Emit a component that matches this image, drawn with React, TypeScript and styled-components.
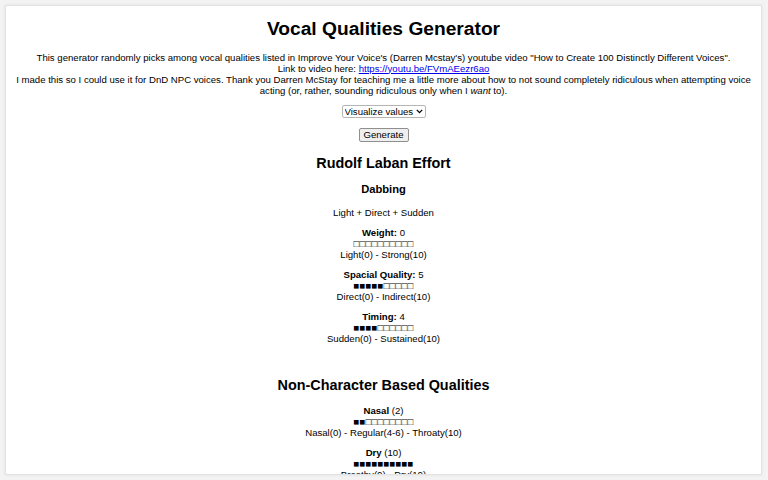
import React from "react";
import styled, { createGlobalStyle } from "styled-components";

const Global = createGlobalStyle`
  html, body { margin: 0; padding: 0; }
  body {
    background: #f3f3f3;
    font-family: "Liberation Sans", Arial, sans-serif;
    font-size: 9.6px;
    color: #000;
  }
`;

const chevron =
  "data:image/svg+xml;utf8," +
  encodeURIComponent(
    '<svg xmlns="http://www.w3.org/2000/svg" width="7" height="5" viewBox="0 0 7 5"><path d="M0.8 0.9 L3.5 3.6 L6.2 0.9" fill="none" stroke="#000" stroke-width="1.3"/></svg>'
  );

const Page = styled.div`
  padding: 5px 6px 5px 5px;
  height: 480px;
  box-sizing: border-box;
`;

const Panel = styled.main`
  background: #fff;
  border: 1px solid #e2e2e2;
  box-shadow: 0 0 3px rgba(0, 0, 0, 0.08);
  height: 470px;
  box-sizing: border-box;
  overflow: hidden;
  padding: 0 8px;
  text-align: center;
  display: flow-root;
`;

const Title = styled.h1`
  font-size: 19.2px;
  font-weight: bold;
  margin: 12px 0 11.5px;
`;

const Intro = styled.p`
  margin: 9.6px 0;
  line-height: normal;
`;

const Link = styled.a`
  color: #0000ee;
  text-decoration: underline;
`;

const Control = styled.div`
  margin: 9.6px 0;
  display: flex;
  justify-content: center;
`;

const Select = styled.select`
  appearance: none;
  -webkit-appearance: none;
  font-family: "Liberation Sans", Arial, sans-serif;
  font-size: 9.6px;
  height: 13px;
  width: 84px;
  padding: 0 0 0 2px;
  line-height: 11px;
  border: 1px solid #b5b5b5;
  border-radius: 2px;
  background: #fff url("${chevron}") no-repeat right 2px center;
  color: #000;
`;

const Button = styled.button`
  font-family: "Liberation Sans", Arial, sans-serif;
  font-size: 9.6px;
  height: 14px;
  width: 50px;
  padding: 0;
  border: 1px solid #8f8f8f;
  border-radius: 2px;
  background: #efefef;
  color: #000;
`;

const SectionTitle = styled.h2<{ $gapTop?: number }>`
  font-size: 14.4px;
  font-weight: bold;
  margin: ${(p) => p.$gapTop ?? 13.3}px 0 12px;
`;

const SubTitle = styled.h3`
  font-size: 11.2px;
  font-weight: bold;
  margin: 11.2px 0 12px;
`;

const Line = styled.p`
  margin: 9.6px 0 9px;
`;

const Stat = styled.div`
  margin: 9px 0;
  line-height: 11px;
`;

const Bar = styled.div`
  letter-spacing: 0.2px;
`;

const bar = (n: number) => "■".repeat(n) + "□".repeat(10 - n);

type StatProps = {
  name: string;
  value: number;
  scale: string;
  paren?: boolean;
};

const StatBlock = ({ name, value, scale, paren }: StatProps) => (
  <Stat>
    <div>
      <b>
        {name}
        {paren ? "" : ":"}
      </b>{" "}
      {paren ? `(${value})` : value}
    </div>
    <Bar>{bar(value)}</Bar>
    <div>{scale}</div>
  </Stat>
);

export default function App() {
  return (
    <>
      <Global />
      <Page>
        <Panel>
          <Title>Vocal Qualities Generator</Title>
          <Intro>
            This generator randomly picks among vocal qualities listed in Improve Your Voice's (Darren
            Mcstay's) youtube video "How to Create 100 Distinctly Different Voices".
            <br />
            Link to video here: <Link href="#">https://youtu.be/FVmAEezr6ao</Link>
            <br />
            I made this so I could use it for DnD NPC voices. Thank you Darren McStay for teaching me a
            little more about how to not sound completely ridiculous when attempting voice acting (or,
            rather, sounding ridiculous only when I <i>want</i> to).
          </Intro>
          <Control>
            <Select defaultValue="visualize">
              <option value="visualize">Visualize values</option>
              <option value="numbers">Numbers only</option>
            </Select>
          </Control>
          <Control>
            <Button>Generate</Button>
          </Control>
          <SectionTitle>Rudolf Laban Effort</SectionTitle>
          <SubTitle>Dabbing</SubTitle>
          <Line>Light + Direct + Sudden</Line>
          <StatBlock name="Weight" value={0} scale="Light(0) - Strong(10)" />
          <StatBlock name="Spacial Quality" value={5} scale="Direct(0) - Indirect(10)" />
          <StatBlock name="Timing" value={4} scale="Sudden(0) - Sustained(10)" />
          <SectionTitle $gapTop={32.8}>Non-Character Based Qualities</SectionTitle>
          <StatBlock
            name="Nasal"
            value={2}
            paren
            scale="Nasal(0) - Regular(4-6) - Throaty(10)"
          />
          <StatBlock name="Dry" value={10} paren scale="Breathy(0) - Dry(10)" />
        </Panel>
      </Page>
    </>
  );
}
